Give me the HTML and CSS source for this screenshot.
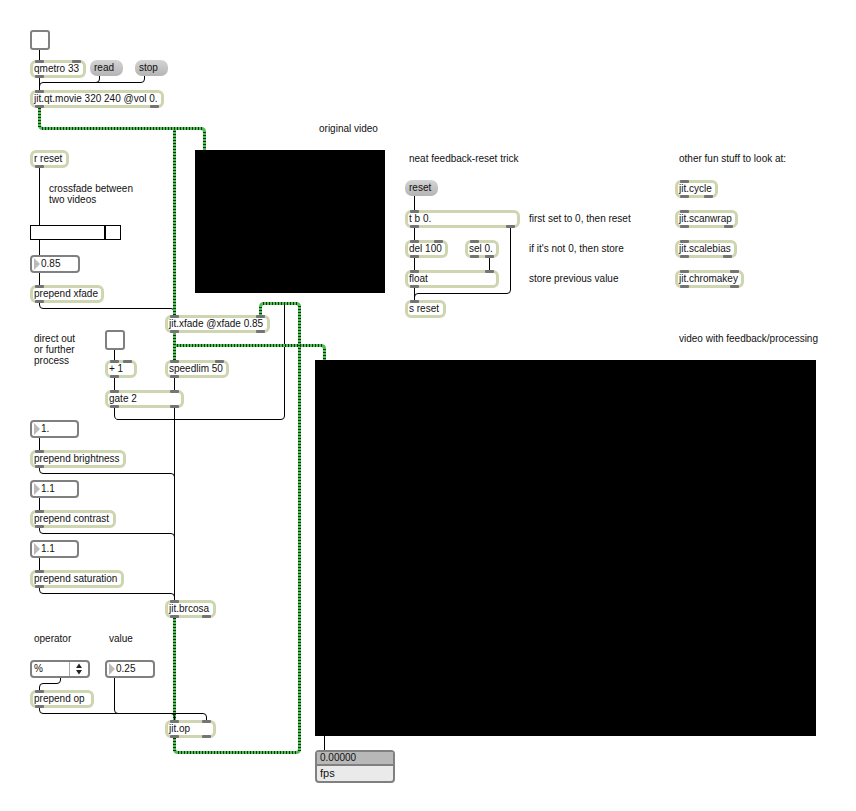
FILE: index.html
```html
<!DOCTYPE html>
<html lang="en">
<head>
<meta charset="utf-8">
<title>Video feedback patch</title>
<link rel="stylesheet" href="styles.css">
</head>
<body>
<main class="patcher">
  <svg class="cords" width="856" height="811" viewBox="0 0 856 811" aria-hidden="true">
    <g class="cord">
      <path d="M39.5 50V62M39.5 76V92M99.500 75V79Q99.500 82.500 96 82.500M144.500 75V79Q144.500 82.500 141 82.500H43Q39.500 82.500 39.500 86"/>
      <path d="M39.500 167V286M39.500 302V305Q39.500 308.500 43 308.500H171Q174.500 308.500 174.500 312"/>
      <path d="M114.500 350V361M114.500 377V391M114.500 407V415Q114.500 419.500 118 419.500H281Q284.500 419.500 284.500 416V303"/>
      <path d="M174.500 377V391M174.500 407V602"/>
      <path d="M39.500 438V452M39.500 468V470Q39.500 473.500 43 473.500H171Q174.500 473.500 174.500 477"/>
      <path d="M39.500 498V512M39.500 528V530Q39.500 533.500 43 533.500H171Q174.500 533.500 174.500 537"/>
      <path d="M39.500 558V572M39.500 588V590Q39.500 593.500 43 593.500H171Q174.500 593.500 174.500 597"/>
      <path d="M60.500 678V680Q60.500 683.500 57 683.500H43Q39.500 683.500 39.500 687V691"/>
      <path d="M414.500 196V211M414.500 227V241M414.500 257V271M414.500 287V301M489.500 257V271M510.500 227V290Q510.500 293.500 507 293.500H418Q414.500 293.500 414.500 297"/>
      <path d="M324.500 736V751"/>
    </g>
    <g class="matrix-base">
      <path d="M39.500 107V125Q39.500 128.500 43 128.500H201Q204.500 128.500 204.500 132V151"/>
      <path d="M174.500 129V317M174.500 332V361"/>
      <path d="M174.500 345.500H321Q324.500 345.500 324.500 349V360"/>
      <path d="M174.500 617V721"/>
      <path d="M174.500 737V749Q174.500 752.500 178 752.500H296Q299.500 752.500 299.500 749V307Q299.500 303.500 296 303.500H264Q260.500 303.500 260.500 307V317"/>
    </g>
    <path class="matrix-dash" d="M39.500 108V127M42 128.500H203M204.500 132V150M174.500 131V317M174.500 332V361M177 345.500H323M324.500 349V360M174.500 618V721M174.500 738V751M178 752.500H298M299.500 306V751M263 303.500H298M260.500 307V316"/>
    <g class="cord">
      <path d="M39.500 707V710Q39.500 713.500 43 713.500H203Q206.500 713.500 206.500 717V722M114.500 678V710Q114.500 713.500 118 713.500M171 713.500Q174.500 713.500 174.500 717V722"/>
    </g>
  </svg>

  <input type="checkbox" class="toggle at-metro-toggle" aria-label="Start metro">
  <div class="object at-qmetro">qmetro 33<i class="in"></i><i class="in last"></i><i class="out"></i></div>
  <button class="message at-read">read</button>
  <button class="message at-stop">stop</button>
  <div class="object at-movie">jit.qt.movie 320 240 @vol 0.<i class="in"></i><i class="out"></i><i class="out last"></i></div>
  <div class="object at-rreset">r reset<i class="out"></i></div>
  <label class="comment at-crossfade" for="xfade">crossfade between<br>two videos</label>
  <input type="range" id="xfade" class="slider at-slider" min="0" max="1" step="0.01" value="0.84">
  <div class="number at-xfade-num"><input type="text" value="0.85" aria-label="Crossfade amount"></div>
  <div class="object at-pxfade">prepend xfade<i class="in"></i><i class="out"></i></div>

  <p class="comment at-original">original video</p>
  <div class="screen at-screen-a"></div>

  <label class="comment at-direct" for="route">direct out<br>or further<br>process</label>
  <input type="checkbox" id="route" class="toggle at-route-toggle">
  <div class="object at-plus">+ 1<i class="in"></i><i class="in last"></i><i class="out"></i></div>
  <div class="object at-gate">gate 2<i class="in"></i><i class="in last"></i><i class="out"></i><i class="out last"></i></div>
  <div class="object at-xfade">jit.xfade @xfade 0.85<i class="in"></i><i class="in last"></i><i class="out"></i><i class="out last"></i></div>
  <div class="object at-speedlim">speedlim 50<i class="in"></i><i class="in last"></i><i class="out"></i></div>

  <div class="number at-bright-num"><input type="text" value="1." aria-label="Brightness"></div>
  <div class="object at-bright">prepend brightness<i class="in"></i><i class="out"></i></div>
  <div class="number at-contrast-num"><input type="text" value="1.1" aria-label="Contrast"></div>
  <div class="object at-contrast">prepend contrast<i class="in"></i><i class="out"></i></div>
  <div class="number at-sat-num"><input type="text" value="1.1" aria-label="Saturation"></div>
  <div class="object at-sat">prepend saturation<i class="in"></i><i class="out"></i></div>
  <div class="object at-brcosa">jit.brcosa<i class="in"></i><i class="out"></i><i class="out last"></i></div>

  <label class="comment at-operator" for="operator">operator</label>
  <label class="comment at-value" for="value">value</label>
  <div class="menu at-menu">
    <select id="operator"><option>%</option><option>+</option><option>-</option><option>*</option></select>
    <svg class="arrows" width="18" height="14" viewBox="0 0 18 14" aria-hidden="true"><path d="M9 1.500L12 6H6ZM9 12.500L6 8H12Z"/></svg>
  </div>
  <div class="number at-value-num"><input type="text" id="value" value="0.25"></div>
  <div class="object at-pop">prepend op<i class="in"></i><i class="out"></i></div>
  <div class="object at-op">jit.op<i class="in"></i><i class="in last"></i><i class="out"></i><i class="out last"></i></div>

  <p class="comment at-trick">neat feedback-reset trick</p>
  <button class="message at-reset">reset</button>
  <div class="object at-tb">t b 0.<i class="in"></i><i class="out"></i><i class="out last"></i></div>
  <p class="comment at-note-a">first set to 0, then reset</p>
  <div class="object at-del">del 100<i class="in"></i><i class="in last"></i><i class="out"></i></div>
  <div class="object at-sel">sel 0.<i class="in"></i><i class="out"></i><i class="out last"></i></div>
  <p class="comment at-note-b">if it's not 0, then store</p>
  <div class="object at-float">float<i class="in"></i><i class="in last"></i><i class="out"></i></div>
  <p class="comment at-note-c">store previous value</p>
  <div class="object at-sreset">s reset<i class="in"></i></div>

  <p class="comment at-other">other fun stuff to look at:</p>
  <div class="object at-cycle">jit.cycle<i class="in"></i><i class="out"></i><i class="out last"></i></div>
  <div class="object at-scanwrap">jit.scanwrap<i class="in"></i><i class="out"></i><i class="out last"></i></div>
  <div class="object at-scalebias">jit.scalebias<i class="in"></i><i class="out"></i><i class="out last"></i></div>
  <div class="object at-chromakey">jit.chromakey<i class="in"></i><i class="in last"></i><i class="out"></i><i class="out last"></i></div>

  <p class="comment at-feedback">video with feedback/processing</p>
  <div class="screen at-screen-b"></div>
  <div class="fps at-fps"><output class="fps-value">0.00000</output><span class="fps-unit">fps</span></div>
</main>
</body>
</html>
```
FILE: styles.css
```css
* { box-sizing: border-box; }

body {
  margin: 0;
  background: #fff;
  color: #111;
  font: 10px/12px "Liberation Sans", Arial, sans-serif;
}

button, input, select { font: inherit; color: inherit; margin: 0; }

.patcher { position: relative; min-height: 100vh; }
.patcher > * { position: absolute; }

/* Patch cords */
.cords { left: 0; top: 0; fill: none; }
.cord { stroke: #000; stroke-width: 1; }
.matrix-base { stroke: #4fbf55; stroke-width: 3; }
.matrix-dash { stroke: #0c330e; stroke-width: 3; stroke-dasharray: 1 2; }

/* Object boxes with their inlets and outlets */
.object {
  height: 18px;
  padding: 0 1px;
  border: 3px solid #cdd6b0;
  border-radius: 6px;
  background: #fff;
  white-space: nowrap;
}
.in, .out {
  position: absolute;
  left: 2px;
  width: 9px;
  height: 3px;
  border-radius: 1px;
  background: #747474;
}
.in { top: -3px; }
.out { bottom: -3px; }
.last { left: auto; right: 2px; }

.message {
  width: 33px;
  height: 16px;
  padding: 0 4px;
  border: 0;
  border-radius: 7px;
  background: linear-gradient(#d4d4d4, #b4b4b4);
  text-align: left;
}

.comment { margin: 0; line-height: 11px; white-space: nowrap; }

.toggle {
  appearance: none;
  width: 20px;
  height: 20px;
  border: 2px solid #808080;
  border-radius: 3px;
  background: #fff;
}

.number, .menu {
  display: flex;
  align-items: center;
  height: 18px;
  border: 2px solid #808080;
  border-radius: 4px;
  background: #fff;
}
.number { width: 49px; padding-left: 2px; gap: 1px; }
.number::before {
  content: "";
  border: solid transparent;
  border-width: 6px 0 6px 6px;
  border-left-color: #bbb;
}
.number input {
  flex: 1;
  min-width: 0;
  height: 12px;
  padding: 0;
  border: 0;
  background: none;
  line-height: 12px;
}

.menu { width: 60px; }
.menu select {
  appearance: none;
  flex: 1;
  min-width: 0;
  height: 14px;
  padding: 0 2px;
  border: 0;
  border-right: 1px solid #aaa;
  border-radius: 0;
  background: none;
}
.arrows { fill: #222; }

.slider {
  appearance: none;
  width: 91px;
  height: 15px;
  border: 1px solid #000;
  background: #fff;
}
.slider::-webkit-slider-thumb {
  appearance: none;
  width: 2px;
  height: 13px;
  background: #000;
}

.screen { background: #000; }

.fps {
  display: flex;
  flex-direction: column;
  border: 2px solid #808080;
  border-radius: 4px;
  background: #eaeaea;
}
.fps-value { padding: 0 3px; border-bottom: 2px solid #808080; background: #b8b8b8; line-height: 12px; }
.fps-unit { padding: 0 3px; font-size: 11px; line-height: 15px; }

/* Canvas positions */
.at-metro-toggle { left: 30px; top: 30px; }
.at-qmetro { left: 30px; top: 60px; width: 56px; }
.at-read { left: 90px; top: 60px; }
.at-stop { left: 135px; top: 60px; }
.at-movie { left: 30px; top: 90px; width: 134px; }
.at-rreset { left: 30px; top: 150px; width: 39px; }
.at-crossfade { left: 49px; top: 183px; }
.at-slider { left: 30px; top: 225px; }
.at-xfade-num { left: 30px; top: 255px; width: 50px; }
.at-pxfade { left: 30px; top: 285px; width: 74px; }
.at-original { left: 319px; top: 123px; }
.at-screen-a { left: 195px; top: 150px; width: 190px; height: 143px; }
.at-direct { left: 34px; top: 333px; }
.at-route-toggle { left: 105px; top: 330px; }
.at-plus { left: 105px; top: 360px; width: 32px; }
.at-gate { left: 105px; top: 390px; width: 79px; }
.at-xfade { left: 165px; top: 315px; width: 105px; }
.at-speedlim { left: 165px; top: 360px; width: 64px; }
.at-bright-num { left: 30px; top: 420px; }
.at-bright { left: 30px; top: 450px; width: 96px; }
.at-contrast-num { left: 30px; top: 480px; }
.at-contrast { left: 30px; top: 510px; width: 86px; }
.at-sat-num { left: 30px; top: 540px; }
.at-sat { left: 30px; top: 570px; width: 94px; }
.at-brcosa { left: 165px; top: 600px; width: 51px; }
.at-operator { left: 34px; top: 633px; }
.at-value { left: 109px; top: 633px; }
.at-menu { left: 30px; top: 660px; }
.at-value-num { left: 105px; top: 660px; width: 50px; }
.at-pop { left: 30px; top: 690px; width: 64px; }
.at-op { left: 165px; top: 720px; width: 51px; }
.at-trick { left: 409px; top: 153px; }
.at-reset { left: 405px; top: 180px; }
.at-tb { left: 405px; top: 210px; width: 115px; }
.at-note-a { left: 529px; top: 213px; }
.at-del { left: 405px; top: 240px; width: 43px; }
.at-sel { left: 465px; top: 240px; width: 34px; }
.at-note-b { left: 529px; top: 243px; }
.at-float { left: 405px; top: 270px; width: 94px; }
.at-note-c { left: 529px; top: 273px; }
.at-sreset { left: 405px; top: 300px; width: 41px; }
.at-other { left: 679px; top: 153px; }
.at-cycle { left: 675px; top: 180px; width: 43px; }
.at-scanwrap { left: 675px; top: 210px; width: 63px; }
.at-scalebias { left: 675px; top: 240px; width: 62px; }
.at-chromakey { left: 675px; top: 270px; width: 69px; }
.at-feedback { left: 679px; top: 333px; }
.at-screen-b { left: 315px; top: 360px; width: 501px; height: 376px; }
.at-fps { left: 315px; top: 750px; width: 80px; height: 33px; }
```
